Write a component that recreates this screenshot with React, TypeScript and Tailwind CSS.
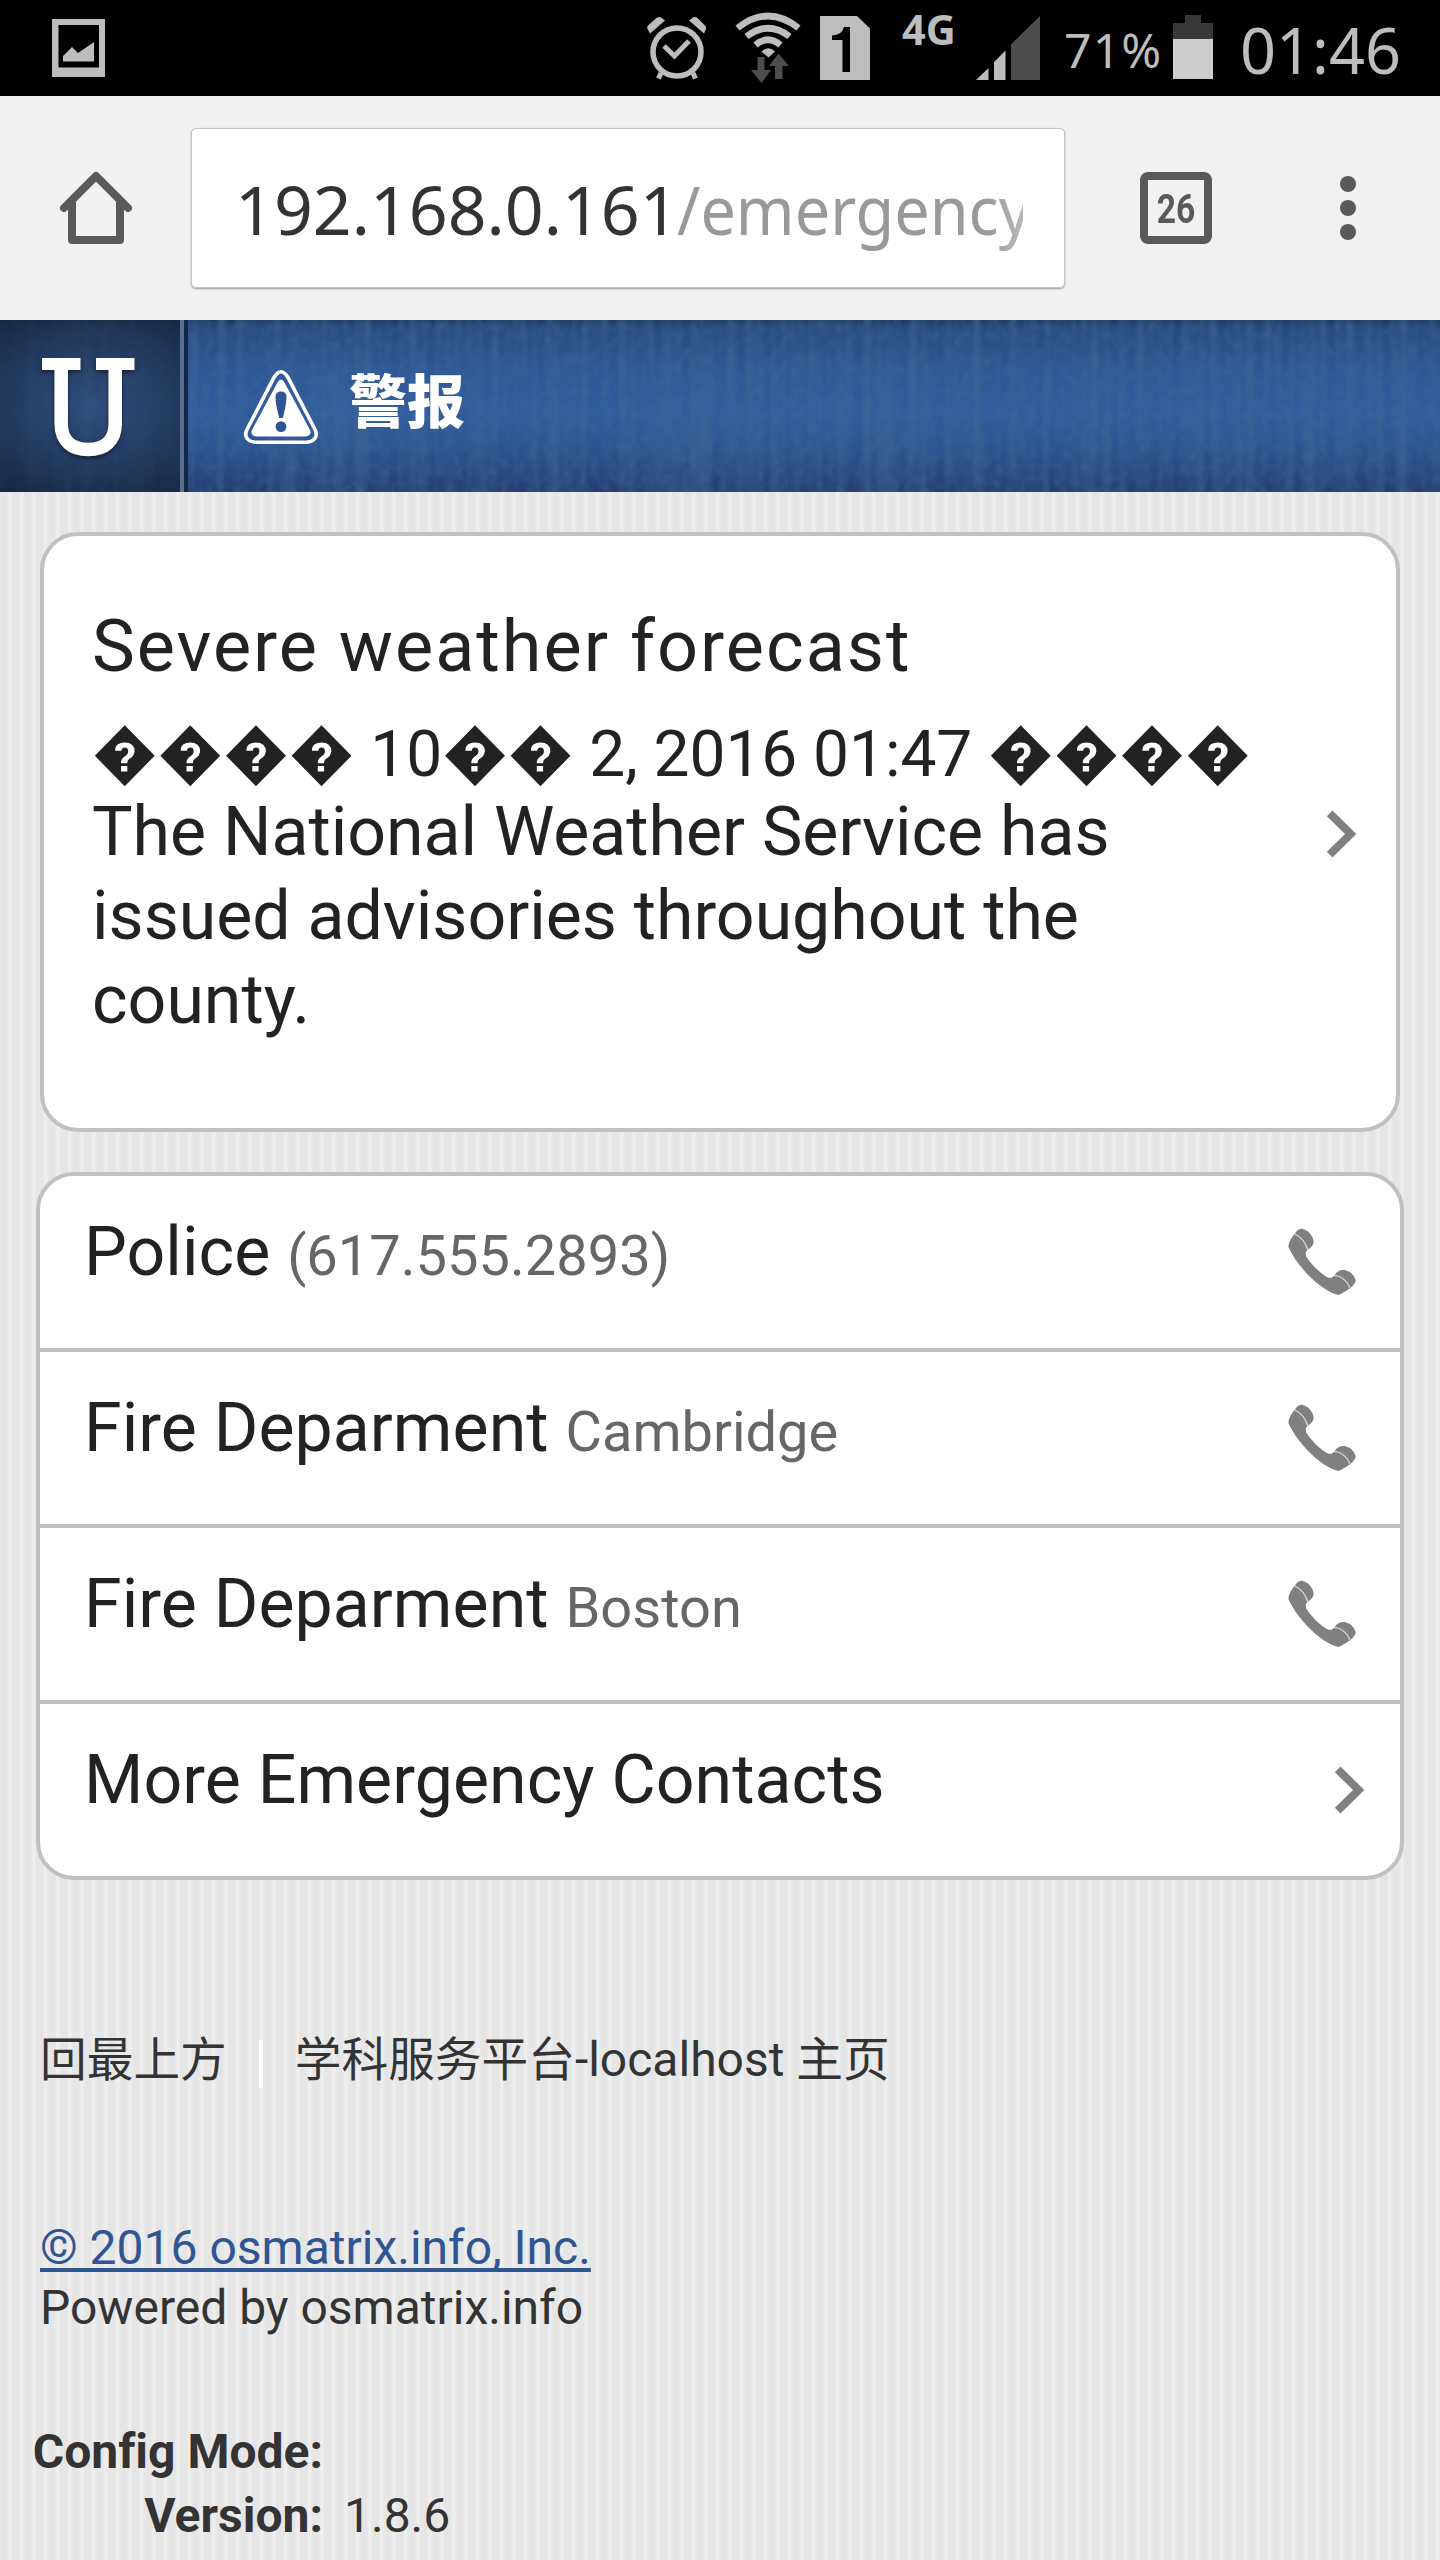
import type { ReactNode } from "react";

function StatusBar() {
  return (
    <div className="flex h-24 w-full bg-black text-[#bdbdbd] font-['Noto_Sans',sans-serif]">
      <svg className="mr-auto h-24 w-[120px]" viewBox="0 0 120 96">
        <path fillRule="evenodd" fill="#bdbdbd" d="M52 19H105V77H52ZM58.5 25V67.5H99V25Z" />
        <path fill="#bdbdbd" d="M63 56L72 47L78 53L94 42V61.5H63Z" />
      </svg>

      {/* alarm */}
      <svg className="h-24 w-20 shrink-0" viewBox="640 0 80 96" fill="none" stroke="#bdbdbd">
        <circle cx="677" cy="52" r="24" strokeWidth="5.5" />
        <path d="M664 46L674.5 56L689 41" strokeWidth="5" />
        <path d="M661 73L658.5 78.5M693 73L695.5 78.5" strokeWidth="5" />
        <path
          d="M650 33.5L665 20.5L661 17.5Q659 16.5 656.5 18L648 25.5Q646.500 27 647.500 29ZM704 33.500L689 20.500L693 17.500Q695 16.500 697.500 18L705 25.500Q706.500 27 706 29Z"
          fill="#bdbdbd"
          stroke="none"
        />
      </svg>

      {/* wi-fi with traffic arrows */}
      <svg className="h-24 w-[90px] shrink-0" viewBox="720 0 90 96" fill="none" stroke="#bdbdbd">
        <path d="M737.5 28Q768 4 798.500 28" strokeWidth="6.600" />
        <path d="M746.5 36.500Q768 20 789.500 36.500" strokeWidth="6.600" />
        <path d="M755.500 45Q768 34.500 780.500 45" strokeWidth="6.600" />
        <path d="M761.500 51.500Q768 45 775 51.500L768.500 57.500Z" fill="#bdbdbd" stroke="none" />
        <path d="M757.500 57H764.500V70H771L761.500 83L751 70H757.500Z" fill="#4d4d4d" stroke="none" />
        <path d="M778.500 53.500L789 66H782.500V79H775V66H769Z" fill="#4d4d4d" stroke="none" />
      </svg>

      {/* SIM slot */}
      <svg className="h-24 w-[70px] shrink-0" viewBox="810 0 70 96">
        <path d="M820 16H857L870 28.500V80H820Z" fill="#bdbdbd" />
        <path d="M850 27V72H842.500V40H832V35.500Q842 35 844 27Z" fill="#000" />
      </svg>

      <div className="w-[90px] shrink-0 pl-[22px] text-[41.5px] font-bold leading-[59px]">4G</div>

      {/* signal */}
      <svg className="h-24 w-20 shrink-0" viewBox="970 0 80 96">
        <path d="M976 80L988.500 68V80ZM994 80V62L1005.500 50.500V80Z" fill="#bdbdbd" />
        <path d="M1011 80V44.500L1040 16V80Z" fill="#4d4d4d" />
      </svg>

      <div className="w-[115px] shrink-0 whitespace-nowrap pl-[14px] text-[48px] leading-[100px] tracking-[1.2px]">71%</div>

      <svg className="h-24 w-[60px] shrink-0" viewBox="1165 0 60 96">
        <path d="M1173 39V23H1185V15H1201V23H1213V39Z" fill="#383838" />
        <path d="M1173 39H1213V79H1173Z" fill="#cccccc" />
      </svg>

      <div className="w-[215px] shrink-0 pl-[15px] text-[63px] leading-[100px]">01:46</div>
    </div>
  );
}

function BrowserBar() {
  return (
    <div className="flex h-56 w-full bg-[#f1f1f1]">
      <svg
        className="ml-[57px] mt-[72px] h-20 w-20 shrink-0"
        viewBox="171 504 240 240"
        fill="none"
        stroke="#5a5a5a"
        strokeWidth="24"
        strokeLinejoin="round"
        strokeLinecap="round"
      >
        <path d="M192 624L288 528L384 624" />
        <path d="M216 606V720H360V606" />
      </svg>
      <div className="ml-[54px] mt-8 flex h-40 w-[874px] shrink-0 items-center rounded-[5px] border border-[#c6c6c6] bg-white pl-[43px] pr-[41px] shadow-[0_1px_2px_#9c9c9c]">
        <div className="w-full overflow-hidden whitespace-nowrap pt-[2px] font-['Noto_Sans',sans-serif] text-[68px] leading-[110px] text-[#333] [mask-image:linear-gradient(to_right,#000_95%,rgba(0,0,0,0.7)_100%)]">
          192.168.0.161
          <span className="ml-[-2px] inline-block origin-left scale-x-[0.925] text-[#999]">/emergency</span>
        </div>
      </div>
      <div className="ml-[75px] mt-[76px] flex size-[72px] shrink-0 items-center justify-center rounded-lg border-8 border-[#5a5a5a] font-['Roboto',sans-serif] text-[40px] font-bold leading-none text-[#5a5a5a]">
        <span className="scale-x-[0.84] pt-[3px]">26</span>
      </div>
      <div className="ml-32 mt-20 flex flex-col gap-2">
        <span className="size-4 rounded-full bg-[#5a5a5a]" />
        <span className="size-4 rounded-full bg-[#5a5a5a]" />
        <span className="size-4 rounded-full bg-[#5a5a5a]" />
      </div>
    </div>
  );
}

function SiteHeader() {
  return (
    <header className="relative flex h-[172px] w-full overflow-hidden bg-[linear-gradient(to_bottom,#1d3a66_0%,#274a80_5%,#2d5796_30%,#2f5c9c_55%,#2b5390_76%,#223f70_100%)]">
      {/* woven fabric texture */}
      <svg className="absolute inset-0 h-full w-full" aria-hidden="true">
        <filter id="weave" x="0" y="0" width="100%" height="100%">
          <feTurbulence type="fractalNoise" baseFrequency="0.11 0.003" numOctaves="1" seed="4" />
          <feColorMatrix values="0 0 0 0 0.06  0 0 0 0 0.15  0 0 0 0 0.32  1 0 0 0 -0.36" />
        </filter>
        <filter id="grain" x="0" y="0" width="100%" height="100%">
          <feTurbulence type="fractalNoise" baseFrequency="0.11 0.09" numOctaves="2" seed="9" />
          <feColorMatrix values="0 0 0 0 0.06  0 0 0 0 0.15  0 0 0 0 0.32  0.8 0 0 0 -0.33" />
        </filter>
        <rect width="100%" height="100%" filter="url(#weave)" />
        <rect width="100%" height="100%" filter="url(#grain)" />
      </svg>
      <div className="relative h-full w-[188px] shrink-0 border-r-4 border-[#142644] bg-[radial-gradient(ellipse_at_center,rgba(45,60,88,0.45)_0%,rgba(28,42,68,0.62)_55%,rgba(18,28,50,0.76)_100%)]">
        <div className="h-full w-full border-r-4 border-[#566f92]">
          <svg className="h-[172px] w-[180px] drop-shadow-[0_2px_2px_rgba(0,0,0,0.5)]" viewBox="0 320 180 172" fill="none" stroke="#fff">
            <path d="M42 364H80.500M96 364H134.500" strokeWidth="12" />
            <path d="M61.200 364V424C61.200 441 72 449.500 88.200 449.500S115.200 441 115.200 424V364" strokeWidth="13.500" />
          </svg>
        </div>
      </div>
      <svg className="relative ml-[52px] mt-[46px] h-[82px] w-[82px] shrink-0" viewBox="240 366 82 82" fill="none">
        <path
          d="M274 377.500Q281 366 288 377.500L315 429.500C318.500 436.500 314 442.300 305.500 442.300H257C247.500 442.300 243.500 436.500 247 429.500Z"
          stroke="#fff"
          strokeWidth="3.600"
        />
        <path d="M277.500 382.500Q281 376.500 284.500 382.500L309.500 429C312 433 310 436.500 305.500 436.500H256.500C252 436.500 250 433 252.500 429Z" fill="#fff" />
        <path d="M275.500 397Q275.500 391.500 281 391.500T286.500 397Q286.500 404 282.800 418H279.200Q275.500 404 275.500 397Z" fill="#2c5592" />
        <circle cx="281" cy="426.600" r="5.400" fill="#2c5592" />
      </svg>
      <h1 className="relative ml-[27px] font-['Noto_Sans_CJK_SC',sans-serif] text-[58px] font-black leading-[157px] text-white">警报</h1>
    </header>
  );
}

function Chevron({ className }: { className: string }) {
  return (
    <svg className={className} viewBox="395 249 105 162" fill="none" stroke="#808080" strokeWidth="24">
      <path d="M412 268L475 330L412 392" />
    </svg>
  );
}

function Phone() {
  return (
    <svg className="mr-[41px] mt-[50px] h-[72px] w-[74px] shrink-0" viewBox="255 140 222 216">
      <path
        fill="#808080"
        d="M284 164C290 153 300 147 309 149C325 153 339 170 341 186C341 197 333 206 322 212C316 218 316 224 319 232C335 255 360 283 385 295C394 297 400 292 405 286C412 274 425 270 437 273C452 277 465 291 467 304C464 318 440 337 414 347C355 330 290 258 265 203C266 188 275 174 284 164Z"
      />
      <path fill="none" stroke="#d8d8d8" strokeWidth="4" d="M285 164C303 173 317 190 323 212M403 288C424 290 441 304 450 325" />
    </svg>
  );
}

function Row({ title, note, icon }: { title: string; note?: string; icon: ReactNode }) {
  return (
    <li className="flex h-[176px] border-b-4 border-[#c0c0c0] last:h-[172px] last:border-b-0">
      <div className="flex-1 whitespace-pre pl-[44px] pt-[36px] text-[68px] leading-[80px] tracking-[0.05px] text-[#222]">
        {title + " "}
        {note && <span className="text-[56px] leading-none tracking-normal text-[#666]">{note}</span>}
      </div>
      {icon}
    </li>
  );
}

export default function App() {
  return (
    <div className="h-[2560px] w-[1440px] overflow-hidden bg-[#e6e6e6] bg-[repeating-linear-gradient(to_right,#e7e7e7_0px,#e5e5e5_3px,#e6e6e6_7px,#eeeeee_9px,#eeeeee_11px,#e7e7e7_12px)] font-['Roboto','Noto_Sans_CJK_SC',sans-serif] text-[#333]">
      <StatusBar />
      <BrowserBar />
      <SiteHeader />

      <section className="mx-10 mt-10 flex h-[600px] items-center rounded-[38px] border-4 border-[#c0c0c0] bg-white pl-12 pr-[37px] text-[#222]">
        <div className="flex-1 self-start whitespace-nowrap pt-[67px]">
          <h2 className="text-[72px] leading-[88px] tracking-[2px]">Severe weather forecast</h2>
          <p className="mt-[24px] text-[64px] leading-[80px] tracking-[-0.04px]">���� 10�� 2, 2016 01:47 ����</p>
          <p className="mt-[-5px] text-[68px] leading-[84px]">
            The National Weather Service has
            <br />
            issued advisories throughout the
            <br />
            county.
          </p>
        </div>
        <Chevron className="mt-1 h-[54px] w-[35px] shrink-0" />
      </section>

      <ul className="mx-9 mt-10 h-[708px] overflow-hidden rounded-[38px] border-4 border-[#c0c0c0] bg-white">
        <Row title="Police" note="(617.555.2893)" icon={<Phone />} />
        <Row title="Fire Deparment" note="Cambridge" icon={<Phone />} />
        <Row title="Fire Deparment" note="Boston" icon={<Phone />} />
        <Row title="More Emergency Contacts" icon={<Chevron className="mr-[33px] mt-[59px] h-[54px] w-[35px] shrink-0" />} />
      </ul>

      <footer className="pl-10 text-[48px] leading-[60px]">
        <nav className="mt-[150px] flex items-center whitespace-nowrap text-[46.7px]">
          <a>回最上方</a>
          <span className="ml-[32px] mr-[32px] mt-[7px] h-12 w-1 bg-white" />
          <a>
            学科服务平台<span className="text-[48px] leading-none">-localhost </span>主页
          </a>
        </nav>
        <p className="mt-[128px] whitespace-nowrap">
          <a className="text-[#2f5592] underline decoration-4 underline-offset-4 [text-decoration-skip-ink:none]">© 2016 osmatrix.info, Inc.</a>
          <br />
          Powered by osmatrix.info
        </p>
        <dl className="ml-[-4px] mt-[82px] grid grid-cols-[287px_auto] gap-x-[21px] whitespace-nowrap leading-[64px]">
          <dt className="flex justify-end font-bold [font-variant-ligatures:none]">Config Mode:</dt>
          <dd />
          <dt className="text-right font-bold">Version:</dt>
          <dd>1.8.6</dd>
        </dl>
      </footer>
    </div>
  );
}
